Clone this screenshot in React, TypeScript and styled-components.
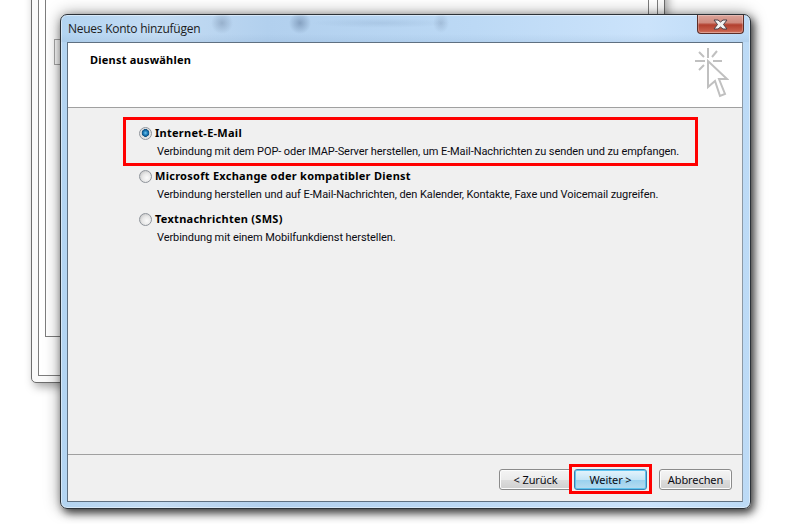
import React from "react";
import styled, { createGlobalStyle } from "styled-components";

const GlobalStyle = createGlobalStyle`
    html, body {
        margin: 0;
        padding: 0;
        background: #fff;
    }
    body {
        width: 800px;
        height: 524px;
        overflow: hidden;
        font-family: "Noto Sans", Tahoma, sans-serif;
        color: #0b0b12;
    }
`;

const Desktop = styled.div`
    position: relative;
    width: 800px;
    height: 524px;
    overflow: hidden;
    background: #fff;
`;

/* the main window behind the dialog */
const BackWindow = styled.div`
    position: absolute;
    left: 31px;
    top: -40px;
    width: 634px;
    height: 423px;
    box-sizing: border-box;
    padding: 0 6px 6px;
    background: #fafafa;
    border: 1px solid #6d6d6d;
    border-radius: 5px;
    box-shadow: 3px 4px 10px rgba(0, 0, 0, 0.35);
`;

const BackInner = styled.div`
    height: 100%;
    box-sizing: border-box;
    background: #fff;
    border: 1px solid #7d7d7d;
    padding-left: 6px;
`;

const BackPane = styled.div`
    width: 604px;
    height: 375px;
    box-sizing: border-box;
    padding: 77px 0 0 8px;
    border: 1px solid #7d7d7d;
    border-top: 0;
`;

const BackGroup = styled.div`
    height: 24px;
    border: 1px solid #a8a8a8;
`;

const Dialog = styled.div`
    position: absolute;
    left: 60px;
    top: 14px;
    width: 691px;
    height: 495px;
    box-sizing: border-box;
    display: flex;
    flex-direction: column;
    padding: 0 7px 6px 6px;
    border: 1px solid #2c3238;
    border-radius: 7px;
    background: linear-gradient(
        90deg,
        #b3d4f1 0%,
        #c4dcf3 14%,
        #b2d0ee 30%,
        #bcd9f5 60%,
        #cbe3fb 85%,
        #bcdaf6 100%
    );
    box-shadow: 3px 4px 8px rgba(0, 0, 0, 0.7), 0 0 16px rgba(0, 0, 0, 0.4),
        inset 0 0 0 1px rgba(255, 255, 255, 0.45);
`;

const TitleBar = styled.div`
    height: 27px;
    flex: none;
    display: flex;
    align-items: center;
    justify-content: space-between;
    margin: 0 -6px;
    padding: 0 6px;
    font-family: "Open Sans", sans-serif;
    font-size: 12px;
    letter-spacing: -0.26px;
    color: #1c1c1c;
    background: radial-gradient(ellipse 11px 11px at 161px 8px, rgba(80, 100, 130, 0.32), transparent),
        radial-gradient(ellipse 11px 11px at 239px 8px, rgba(70, 95, 130, 0.42), transparent),
        radial-gradient(ellipse 8px 10px at 380px 8px, rgba(80, 100, 130, 0.22), transparent),
        radial-gradient(ellipse 70px 5px at 320px 8px, rgba(90, 120, 155, 0.14), transparent),
        linear-gradient(180deg, transparent 70%, rgba(90, 125, 165, 0.1) 100%);
`;

const Title = styled.span`
    margin-top: -1px;
    padding-left: 1px;
`;

const CloseButton = styled.div`
    width: 47px;
    height: 19px;
    margin: -8px -1px 0 0;
    box-sizing: border-box;
    display: flex;
    align-items: center;
    justify-content: center;
    border: 1px solid #5c2e28;
    border-top: 0;
    border-radius: 0 0 4px 4px;
    background: linear-gradient(180deg, #dca49a 0%, #cf8a7e 42%, #b23f2e 55%, #c8604c 90%, #d98a78 100%);
    box-shadow: inset 0 0 0 1px rgba(255, 255, 255, 0.25);
    svg {
        display: block;
    }
`;

const Client = styled.div`
    flex: 1;
    display: flex;
    flex-direction: column;
    border: 1px solid #5f7081;
    border-right-color: #8c98a4;
    background: #f0f0f0;
    min-height: 0;
`;

const Header = styled.div`
    height: 65px;
    flex: none;
    box-sizing: border-box;
    padding: 5px 13px 0 22px;
    display: flex;
    justify-content: space-between;
    background: #fff;
    border-bottom: 1px solid #a0a0a0;
`;

const HeaderTitle = styled.div`
    margin-top: 4px;
    font-size: 11px;
    font-weight: 700;
    line-height: 15px;
    letter-spacing: 0.22px;
    color: #000;
`;

const Options = styled.div`
    flex: 1;
    display: flex;
    flex-direction: column;
    padding: 16px 0 0 71px;
    border-bottom: 1px solid #a0a0a0;
`;

const Option = styled.div<{ $marked?: boolean }>`
    position: relative;
    height: 43px;
    display: grid;
    grid-template-columns: 13px 1fr;
    column-gap: 3px;
    grid-template-rows: 18px 20px;
    align-items: center;
    ${(p) =>
        p.$marked &&
        `
        &::after {
            content: "";
            position: absolute;
            left: -16px;
            top: -7px;
            width: 569px;
            height: 43px;
            border: 3px solid #f00;
        }
    `}
`;

const Radio = styled.span<{ $checked?: boolean }>`
    width: 13px;
    height: 13px;
    box-sizing: border-box;
    border-radius: 50%;
    border: 1px solid #8f949b;
    background: ${(p) =>
        p.$checked
            ? "radial-gradient(circle at 50% 45%, #6fc6ee 0, #1c7ab8 26%, #0d4f80 44%, #dcdcdc 50%, #f7f7f7 100%)"
            : "radial-gradient(circle at 62% 62%, #fbfbfb 0, #e8e8e8 45%, #b9b9b9 100%)"};
`;

const OptionTitle = styled.div`
    font-size: 11px;
    font-weight: 700;
    line-height: 14px;
    letter-spacing: 0.27px;
    color: #000;
`;

const OptionText = styled.div`
    grid-column: 2;
    padding-left: 2px;
    font-family: Roboto, sans-serif;
    font-size: 11px;
    line-height: 14px;
    letter-spacing: -0.08px;
    white-space: nowrap;
`;

const Footer = styled.div`
    height: 46px;
    flex: none;
    box-sizing: border-box;
    padding: 14px 10px 0 0;
    display: flex;
    justify-content: flex-end;
    align-items: flex-start;
`;

const Button = styled.div<{ $primary?: boolean; $marked?: boolean }>`
    position: relative;
    width: 73px;
    height: 21px;
    box-sizing: border-box;
    margin-left: ${(p) => (p.$marked ? "2px" : "0")};
    margin-right: ${(p) => (p.$marked ? "12px" : "0")};
    display: flex;
    align-items: center;
    justify-content: center;
    font-size: 11px;
    letter-spacing: -0.1px;
    border-radius: 3px;
    border: 1px solid ${(p) => (p.$primary ? "#3c7fb1" : "#8b8b8b")};
    background: ${(p) =>
        p.$primary
            ? "linear-gradient(180deg, #e5f4fc 0%, #c4e5f6 50%, #98d1ef 52%, #b8dcf0 100%)"
            : "linear-gradient(180deg, #f4f4f4 0%, #ebebeb 50%, #dddddd 52%, #cfcfcf 100%)"};
    box-shadow: ${(p) =>
        p.$primary ? "inset 0 0 0 1px #5fc4ef" : "inset 0 0 0 1px #fcfcfc"};
    ${(p) =>
        p.$marked &&
        `
        &::after {
            content: "";
            position: absolute;
            left: -6px;
            top: -6px;
            width: 77px;
            height: 24px;
            border: 3px solid #f00;
        }
    `}
`;

const ClickIcon = () => (
    <svg width="34" height="50" viewBox="0 0 34 50" fill="none" stroke="#c0c0c0" strokeWidth="2">
        <path d="M13 0v10M0 13h10M18 13h9M4 4l5 5M22 3l-5 6M4 22l5-5" />
        <path d="M13 13v26l7-6 5 15 5-2-6-15h8z" fill="#fff" />
    </svg>
);

const CloseIcon = () => (
    <svg width="15" height="11" viewBox="0 0 15 11">
        <path
            d="M1 1h4l2.5 2L10 1h4l-3.5 4.500L14 10h-4L7.500 8 5 10H1l3.500-4.500z"
            fill="#f2f2f2"
            stroke="#4b4048"
            strokeWidth="1"
        />
    </svg>
);

const App = () => {
    return (
        <Desktop>
            <GlobalStyle />
            <BackWindow>
                <BackInner>
                    <BackPane>
                        <BackGroup />
                    </BackPane>
                </BackInner>
            </BackWindow>
            <Dialog>
                <TitleBar>
                    <Title>Neues Konto hinzufügen</Title>
                    <CloseButton>
                        <CloseIcon />
                    </CloseButton>
                </TitleBar>
                <Client>
                    <Header>
                        <HeaderTitle>Dienst auswählen</HeaderTitle>
                        <ClickIcon />
                    </Header>
                    <Options>
                        <Option $marked>
                            <Radio $checked />
                            <OptionTitle>Internet-E-Mail</OptionTitle>
                            <OptionText>
                                Verbindung mit dem POP- oder IMAP-Server herstellen, um E-Mail-Nachrichten zu senden und zu empfangen.
                            </OptionText>
                        </Option>
                        <Option>
                            <Radio />
                            <OptionTitle>Microsoft Exchange oder kompatibler Dienst</OptionTitle>
                            <OptionText>
                                Verbindung herstellen und auf E-Mail-Nachrichten, den Kalender, Kontakte, Faxe und Voicemail zugreifen.
                            </OptionText>
                        </Option>
                        <Option>
                            <Radio />
                            <OptionTitle>Textnachrichten (SMS)</OptionTitle>
                            <OptionText>Verbindung mit einem Mobilfunkdienst herstellen.</OptionText>
                        </Option>
                    </Options>
                    <Footer>
                        <Button>&lt; Zurück</Button>
                        <Button $primary $marked>
                            Weiter &gt;
                        </Button>
                        <Button>Abbrechen</Button>
                    </Footer>
                </Client>
            </Dialog>
        </Desktop>
    );
};

export default App;
